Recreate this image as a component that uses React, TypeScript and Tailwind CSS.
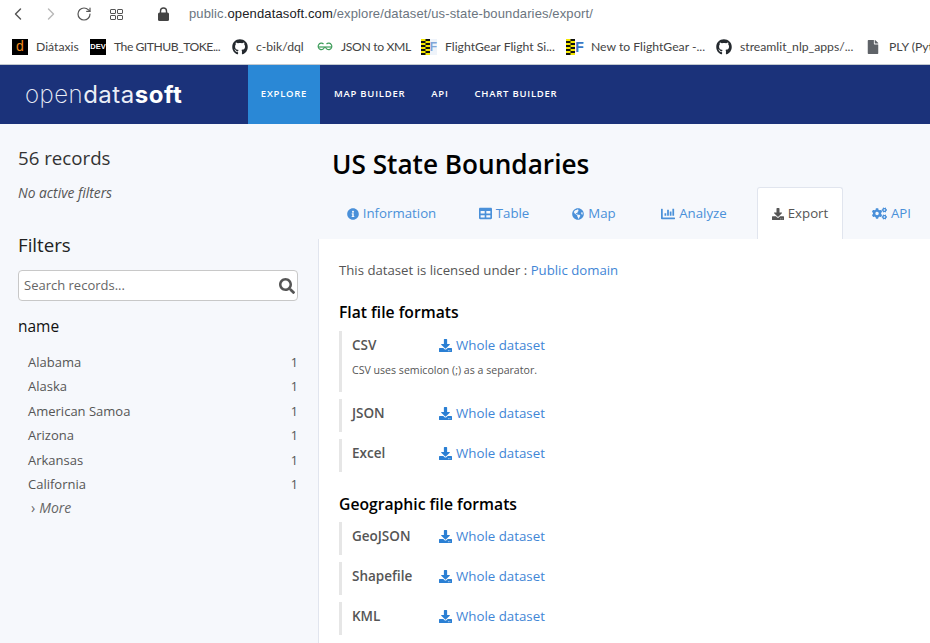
import { FaChartBar, FaCogs, FaDownload, FaGithub, FaGlobeAmericas, FaInfoCircle, FaSearch, FaTable, FaFile } from "react-icons/fa";
import { LuChevronLeft, LuChevronRight, LuRotateCw } from "react-icons/lu";

const sans = "font-['Open_Sans',sans-serif]";

function Checker() {
  return (
    <svg width="9" height="16" viewBox="0 0 9 16" className="shrink-0">
      <rect width="9" height="16" fill="#111" />
      {[0, 1, 2, 3, 4, 5, 6, 7].map((i) => (
        <rect key={i} x={i % 2 === 0 ? 0 : 4.5} y={i * 2} width="4.5" height="2" fill="#f2e600" />
      ))}
    </svg>
  );
}

function GfgIcon() {
  return (
    <svg width="16" height="10" viewBox="0 0 16 10" fill="none" stroke="#3f9d5b" strokeWidth="1.2">
      <path d="M1 5h14" />
      <path d="M7.5 5a3.2 3.2 0 1 1-1-3" />
      <path d="M8.5 5a3.2 3.2 0 1 0 1-3" />
    </svg>
  );
}

function Bookmark({ icon, label, width, tight }: { icon: React.ReactNode; label: string; width: string; tight?: string }) {
  return (
    <div className={`flex items-center shrink-0 ${width}`}>
      <div className="flex w-[16px] h-[16px] items-center justify-center shrink-0">{icon}</div>
      <span className={`ml-[8px] text-[12.2px] text-[#444] whitespace-nowrap font-['Lato',sans-serif] ${tight ?? ""}`}>{label}</span>
    </div>
  );
}

function BrowserBar() {
  return (
    <div className="h-[65px] bg-white border-b border-[#c3c9cf] shrink-0">
      <div className="flex items-center h-[28px] text-[#555]">
        <LuChevronLeft className="ml-[8px] shrink-0" size={20} strokeWidth={1.7} />
        <LuChevronRight className="ml-[13px] shrink-0 text-[#b9b9b9]" size={20} strokeWidth={1.7} />
        <LuRotateCw className="ml-[15px] shrink-0" size={16} strokeWidth={1.8} />
        <div className="ml-[18px] grid grid-cols-2 gap-[1px] shrink-0">
          <div className="w-[6px] h-[5px] border border-[#555] rounded-[1px]" />
          <div className="w-[6px] h-[5px] border border-[#555] rounded-[1px]" />
          <div className="w-[6px] h-[5px] border border-[#555] rounded-[1px]" />
          <div className="w-[6px] h-[5px] border border-[#555] rounded-[1px]" />
        </div>
        <svg width="11" height="14" viewBox="0 0 11 14" className="ml-[35px] shrink-0">
          <path d="M2.5 6V4a3 3 0 0 1 6 0v2" fill="none" stroke="#444" strokeWidth="1.4" />
          <rect y="5.5" width="11" height="8.5" rx="1.5" fill="#444" />
        </svg>
        <div className="ml-[20px] text-[13px] whitespace-nowrap text-[#6b7580] font-['Liberation_Sans',sans-serif] tracking-[0.13px]">
          public.<span className="text-[#202124]">opendatasoft.com</span>/explore/dataset/us-state-boundaries/export/
        </div>
      </div>
      <div className="flex items-center mt-[2px] h-[34px] pl-[12px] overflow-hidden">
        <Bookmark
          width="w-[78px]"
          label="Diátaxis"
          icon={<div className="w-[16px] h-[16px] bg-black text-[#f08a1d] text-[14px] leading-[14px] text-center font-['Liberation_Sans',sans-serif]">d</div>}
        />
        <Bookmark
          width="w-[142px]"
          label="The GITHUB_TOKE..."
          tight="tracking-[-0.5px]"
          icon={<div className="w-[16px] h-[16px] bg-black text-white text-[7.5px] font-bold leading-[16px] text-center font-['Liberation_Sans',sans-serif]">DEV</div>}
        />
        <Bookmark width="w-[85px]" label="c-bik/dql" icon={<FaGithub size={16} color="#24292e" />} />
        <Bookmark width="w-[104px]" label="JSON to XML" tight="tracking-[-0.35px]" icon={<GfgIcon />} />
        <Bookmark
          width="w-[146px]"
          label="FlightGear Flight Si..."
          icon={
            <div className="flex items-center bg-[#eef3fa]">
              <Checker />
              <span className="text-[#7fa5d8] text-[12px] font-bold leading-none font-['Liberation_Sans',sans-serif]">F</span>
            </div>
          }
        />
        <Bookmark
          width="w-[149px]"
          label="New to FlightGear -..."
          icon={
            <div className="flex items-center">
              <Checker />
              <span className="text-[#3b78c4] text-[14px] font-bold leading-none font-['Liberation_Sans',sans-serif]">F</span>
            </div>
          }
        />
        <Bookmark width="w-[149px]" label="streamlit_nlp_apps/..." icon={<FaGithub size={16} color="#24292e" />} />
        <Bookmark width="w-[100px]" label="PLY (Python Lex-Yacc)" icon={<FaFile size={14} color="#5f6368" />} />
      </div>
    </div>
  );
}

function NavBar() {
  const links = ["MAP BUILDER", "API", "CHART BUILDER"];
  return (
    <div className={`flex h-[59px] bg-[#1b327a] shrink-0 ${sans}`}>
      <div className="w-[248px] pl-[25px] flex items-center text-[24px] text-[#e9edf6] whitespace-nowrap tracking-[0.5px] font-['Inter',sans-serif]">
        <span className="font-extralight">open</span>
        <span className="font-normal">data</span>
        <span className="font-bold text-white">soft</span>
      </div>
      <div className="w-[72px] bg-[#2a88d6] flex items-center justify-center text-white text-[9.5px] font-semibold tracking-[0.75px]">EXPLORE</div>
      <div className="flex items-center">
        {links.map((l, i) => (
          <div
            key={l}
            className={`text-white text-[9.5px] font-semibold tracking-[0.75px] whitespace-nowrap ${i === 0 ? "ml-[14px]" : "ml-[26px]"}`}
          >
            {l}
          </div>
        ))}
      </div>
    </div>
  );
}

function Sidebar() {
  const states = ["Alabama", "Alaska", "American Samoa", "Arizona", "Arkansas", "California"];
  return (
    <aside className="w-[318px] shrink-0 pl-[18px] pr-[20px] pt-[21px]">
      <div className="text-[18.7px] leading-[26px] text-[#333]">56 records</div>
      <div className="mt-[13px] text-[13.8px] leading-[18px] italic text-[#555]">No active filters</div>
      <div className="mt-[30px] text-[18.7px] leading-[26px] text-[#222]">Filters</div>
      <div className="mt-[12px] h-[31px] bg-white border border-[#c8c8c8] rounded-[4px] flex items-center justify-between pl-[5px] pr-[2px]">
        <span className="pt-[1px] text-[13px] text-[#666]">Search records...</span>
        <FaSearch size={16} color="#555" />
      </div>
      <div className="mt-[13px] text-[15.5px] leading-[24px] text-[#111]">name</div>
      <div className="mt-[12.4px] pl-[10px]">
        {states.map((s) => (
          <div key={s} className="flex justify-between items-center h-[24.5px] text-[13px] text-[#555]">
            <span>{s}</span>
            <span className="mt-[1px] text-[12.5px] text-[#555]">1</span>
          </div>
        ))}
      </div>
      <div className="mt-[1px] pl-[13px] text-[14px] leading-[20px] italic text-[#666]">
        <span className="not-italic mr-[4px]">›</span>More
      </div>
    </aside>
  );
}

function Tab({ icon, label, active, width }: { icon: React.ReactNode; label: string; active?: boolean; width: string }) {
  return (
    <div
      className={`h-[52px] flex items-center justify-center gap-[4px] text-[13.25px] shrink-0 ${width} ${
        active ? "bg-white border border-b-0 border-[#e1e5ee] rounded-t-[3px] text-[#555] -mb-px" : "pt-[1px] text-[#4a90d9]"
      }`}
    >
      {icon}
      <span>{label}</span>
    </div>
  );
}

function FormatRow({ name, note }: { name: string; note?: string }) {
  return (
    <div className={`border-l-[3px] border-[#e6e6e6] pl-[10px] ${note ? "h-[61px]" : "h-[33px]"}`}>
      <div className="flex items-center h-[29px]">
        <span className="w-[87px] text-[13.5px] font-semibold text-[#555]">{name}</span>
        <span className="flex items-center gap-[4px] text-[13.3px] text-[#3f86d6]">
          <FaDownload size={13} color="#2a7fd4" />
          Whole dataset
        </span>
      </div>
      {note && <div className="mt-[3px] text-[10.6px] leading-[14px] text-[#555]">{note}</div>}
    </div>
  );
}

function Main() {
  return (
    <main className="flex-1 min-w-0 flex flex-col">
      <h1 className="pl-[14px] pt-[23px] text-[26.2px] leading-[35px] font-semibold text-black whitespace-nowrap">US State Boundaries</h1>
      <div className="mt-[5px] h-[52px] flex border-b border-[#e1e5ee] pl-[10px] box-content">
        <Tab width="w-[127px]" label="Information" icon={<FaInfoCircle size={12} />} />
        <Tab width="w-[98px]" label="Table" icon={<FaTable size={13} />} />
        <Tab width="w-[82px]" label="Map" icon={<FaGlobeAmericas size={12} />} />
        <Tab width="w-[118px]" label="Analyze" icon={<FaChartBar size={14} />} />
        <Tab width="w-[86px] ml-[4px]" label="Export" active icon={<FaDownload size={12} />} />
        <Tab width="w-[97px]" label="API" icon={<FaCogs size={15} />} />
      </div>
      <div className="flex-1 bg-white border-l border-[#e1e5ee] pl-[20px] pt-[22px] -mt-px">
        <div className="text-[13.2px] leading-[18px] text-[#555]">
          This dataset is licensed under : <span className="text-[#3f86d6]">Public domain</span>
        </div>
        <h2 className="mt-[21px] text-[15.7px] leading-[24px] font-semibold text-black">Flat file formats</h2>
        <div className="mt-[7px] flex flex-col gap-[7px]">
          <FormatRow name="CSV" note="CSV uses semicolon (;) as a separator." />
          <FormatRow name="JSON" />
          <FormatRow name="Excel" />
        </div>
        <h2 className="mt-[20px] text-[15.7px] leading-[24px] font-semibold text-black">Geographic file formats</h2>
        <div className="mt-[6px] flex flex-col gap-[7px]">
          <FormatRow name="GeoJSON" />
          <FormatRow name="Shapefile" />
          <FormatRow name="KML" />
        </div>
      </div>
    </main>
  );
}

export default function App() {
  return (
    <div className={`h-[643px] w-[930px] overflow-hidden flex flex-col bg-[#f6f8fc] ${sans}`}>
      <BrowserBar />
      <NavBar />
      <div className="flex flex-1 min-h-0">
        <Sidebar />
        <Main />
      </div>
    </div>
  );
}
